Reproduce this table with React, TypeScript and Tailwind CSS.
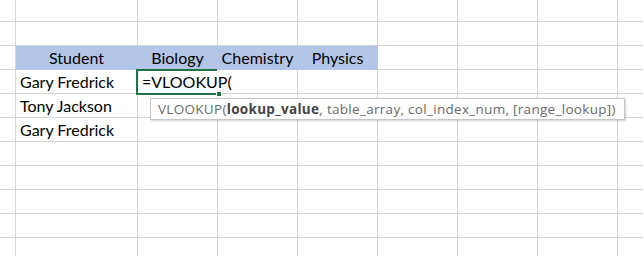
import React from "react";

type Cell = { text?: string; center?: boolean };

const rowsData: Record<number, Record<number, Cell>> = {
  2: {
    1: { text: "Student", center: true },
    2: { text: "Biology", center: true },
    3: { text: "Chemistry", center: true },
    4: { text: "Physics", center: true },
  },
  3: { 1: { text: "Gary Fredrick" } },
  4: { 1: { text: "Tony Jackson" } },
  5: { 1: { text: "Gary Fredrick" } },
};

const NROWS = 11;
const NCOLS = 9;

function ActiveCell() {
  return (
    <div className="relative h-full border-b border-[#d4d4d4] bg-white">
      <div className="absolute left-[-2px] top-[-1px] h-[26px] w-[81px] border-y-2 border-l-2 border-[#217346]" />
      <div className="absolute left-[78px] top-[21px] h-[6px] w-[6px] border border-white bg-[#217346]" />
      <div className="relative z-10 flex h-full items-end whitespace-nowrap pb-[1px] pl-[4px] text-[16px] leading-[20px] text-black">
        =VLOOKUP(
      </div>
      <div className="absolute left-[12px] top-[28px] z-20 flex h-[22px] w-[475px] items-center whitespace-nowrap border border-[#c6c6c6] bg-white pl-[7px] text-[13.5px] tracking-[0.3px] text-[#6a6a6a] shadow-[1px_1px_2px_rgba(0,0,0,0.18)] [font-family:'Open_Sans',sans-serif]">
        VLOOKUP(<span className="font-bold text-[#444444]">lookup_value</span>, table_array, col_index_num, [range_lookup])
      </div>
    </div>
  );
}

export default function App() {
  const cells: React.ReactNode[] = [];
  for (let r = 0; r < NROWS; r++) {
    for (let c = 0; c < NCOLS; c++) {
      const key = `${r}-${c}`;
      if (r === 3 && c === 2) {
        cells.push(<ActiveCell key={key} />);
        continue;
      }
      const data = rowsData[r]?.[c];
      const lastCol = c === NCOLS - 1;
      const lastRow = r === NROWS - 1;
      const isHeader = r === 2 && c >= 1 && c <= 4;
      const cls = [
        "flex h-full items-end whitespace-nowrap pb-[1px] text-[16px] leading-[20px] text-black",
        lastCol ? "" : "border-r",
        lastRow ? "" : "border-b",
        isHeader ? "bg-[#b4c6e7] border-[#b4c6e7]" : "border-[#d4d4d4]",
        data?.center ? "justify-center" : "pl-[4px]",
      ].join(" ");
      cells.push(
        <div key={key} className={cls}>
          {data?.text ?? ""}
        </div>
      );
    }
  }
  return (
    <div className="grid h-[256px] w-[643px] overflow-hidden bg-white grid-cols-[16px_122px_80px_80px_80px_80px_80px_80px_25px] grid-rows-[22px_24px_24px_24px_24px_24px_24px_24px_24px_24px_18px] [font-family:'Lato',sans-serif]">
      {cells}
    </div>
  );
}
